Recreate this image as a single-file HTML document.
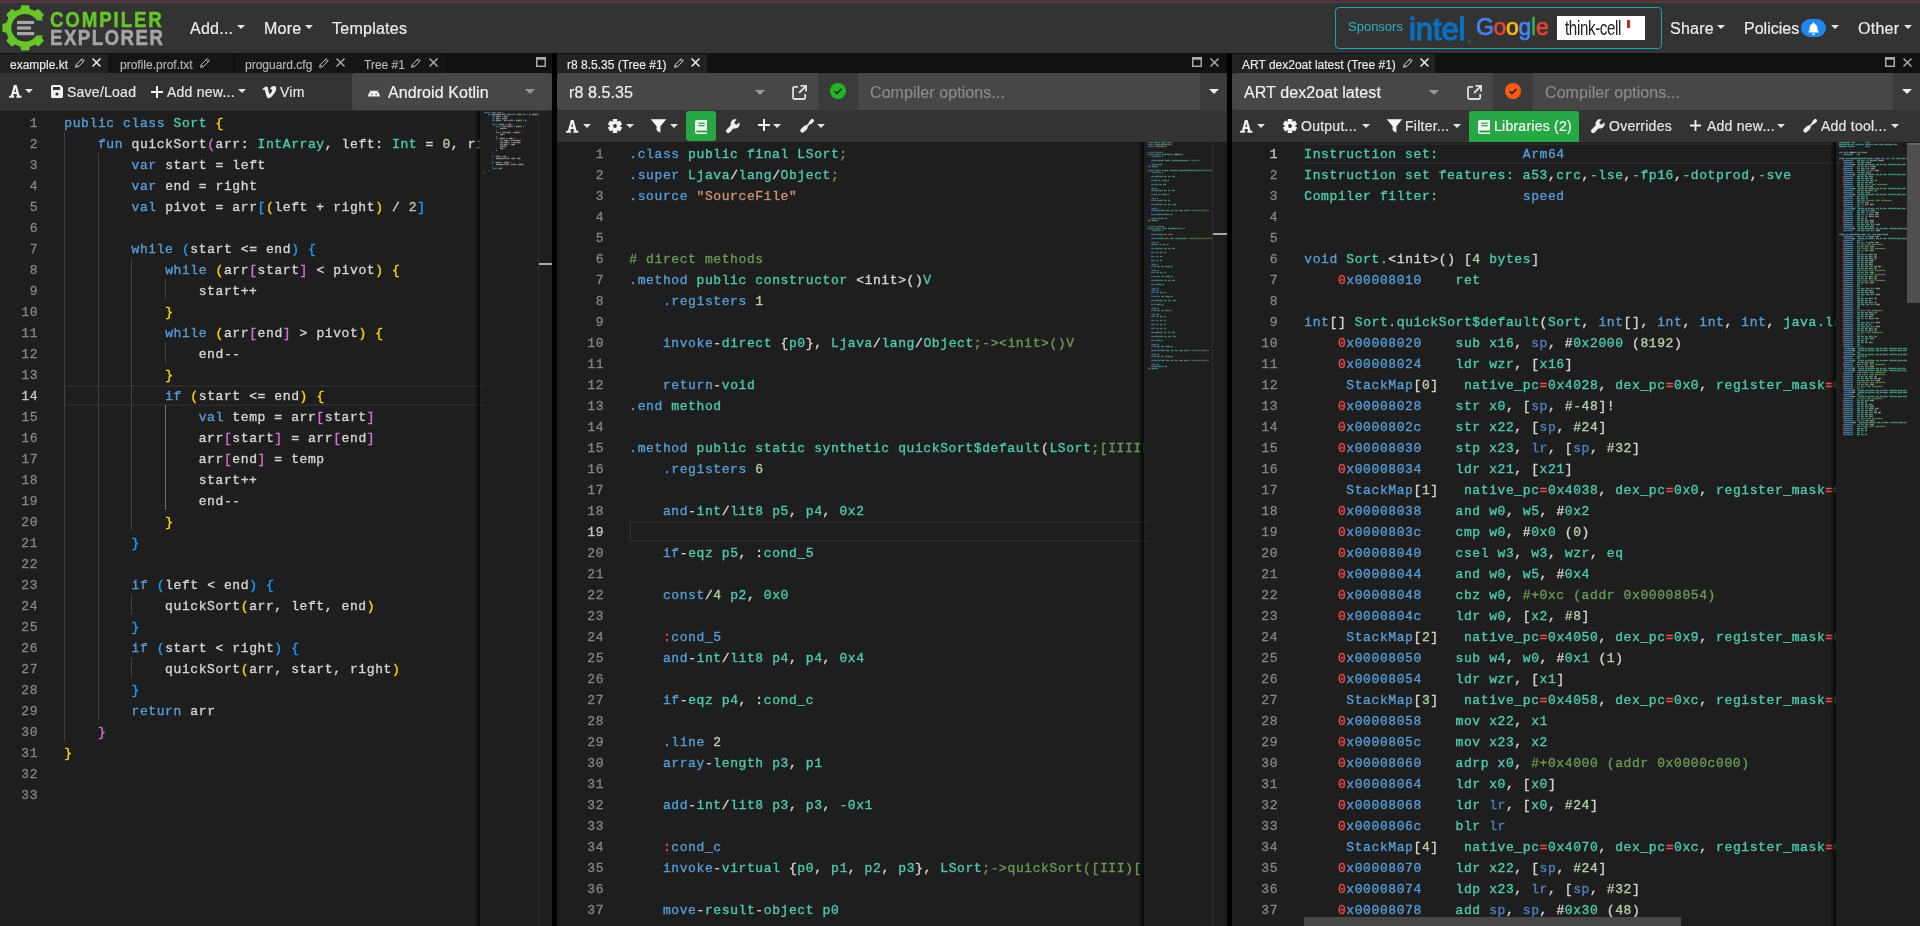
<!DOCTYPE html><html><head><meta charset="utf-8"><style>
*{box-sizing:border-box;margin:0;padding:0}
html,body{width:1920px;height:926px;overflow:hidden;background:#000;font-family:"Liberation Sans",sans-serif;color:#ddd}
.a{position:absolute}
#topline{position:absolute;left:0;top:0;width:1920px;height:3px;background:linear-gradient(#4f3239 0,#4f3239 2px,#4b4244 2px,#4b4244 3px)}
#nav{position:absolute;left:0;top:3px;width:1920px;height:50px;background:#333}
.nl{position:absolute;top:16px;font-size:16px;color:#ececec;line-height:20px;white-space:nowrap;letter-spacing:0.25px;-webkit-text-stroke:0.2px currentColor}
.car{position:absolute;width:0;height:0;border-left:4.5px solid transparent;border-right:4.5px solid transparent;border-top:5px solid #e6e6e6}
.panel{position:absolute;top:53px;height:873px;background:#1e1e1e;overflow:hidden}
.tabs{position:absolute;left:0;top:0;right:0;height:20px;background:#111}
.tab{position:absolute;top:3px;height:19px;font-size:12px;line-height:19px;color:#b8b8b8;white-space:nowrap;-webkit-text-stroke:0.15px currentColor}
.tab.act{background:#222;color:#ececec}
.tb{position:absolute;left:0;right:0;background:#333}
.tt{position:absolute;font-size:14px;line-height:18px;color:#e6e6e6;white-space:nowrap;-webkit-text-stroke:0.2px currentColor}
.code{position:absolute;font-family:"Liberation Mono",monospace;font-size:13px;letter-spacing:0.6px;line-height:21px;color:#d4d4d4;white-space:pre;-webkit-text-stroke:0.35px currentColor}
.ln{position:absolute;font-family:"Liberation Mono",monospace;font-size:13px;letter-spacing:0.6px;line-height:21px;color:#858585;text-align:right;white-space:pre;-webkit-text-stroke:0.3px currentColor}
.b{color:#569cd6}.t{color:#4ec9b0}.n{color:#b5cea8}.s{color:#ce9178}.c{color:#6a9955}.w{color:#d4d4d4}
.y{color:#ffd700}.p{color:#da70d6}.u{color:#179fff}.r{color:#f44747}.d{color:#4e80bf}
svg{position:absolute;overflow:visible}
</style></head><body><div style="position:absolute;left:0;top:0;width:1920px;height:926px;overflow:hidden;will-change:transform"><div id="topline"></div><div id="nav"><svg style="left:0;top:0" width="50" height="50" viewBox="0 0 50 50"><path fill="#67c52a" d="M17.71 6.97 L20.16 6.14 L21.22 2.13 L28.98 2.13 L30.04 6.14 L32.49 6.97 L34.80 8.11 L38.39 6.03 L43.87 11.51 L41.79 15.10 L42.93 17.41 L43.76 19.86 L47.77 20.92 L47.77 28.68 L43.76 29.74 L42.93 32.19 L41.79 34.50 L43.87 38.09 L38.39 43.57 L34.80 41.49 L32.49 42.63 L30.04 43.46 L28.98 47.47 L21.22 47.47 L20.16 43.46 L17.71 42.63 L15.40 41.49 L11.81 43.57 L6.33 38.09 L8.41 34.50 L7.27 32.19 L6.44 29.74 L2.43 28.68 L2.43 20.92 L6.44 19.86 L7.27 17.41 L8.41 15.10 L6.33 11.51 L11.81 6.03 L15.40 8.11 Z"/><circle cx="25.1" cy="24.8" r="13.8" fill="#333"/><rect x="25" y="17.5" width="26" height="14.9" fill="#333"/><rect x="17" y="17.9" width="17.2" height="3.2" fill="#a8a8a8"/><rect x="17" y="23.4" width="14" height="3.2" fill="#a8a8a8"/><rect x="17" y="29" width="17.2" height="3.2" fill="#a8a8a8"/></svg><div class="a" style="left:50px;top:6px;font-size:22px;font-weight:bold;line-height:22px;color:#67c52a;letter-spacing:2.2px;-webkit-text-stroke:0.5px #67c52a;transform:scaleX(0.85);transform-origin:0 0">COMPILER</div><div class="a" style="left:50px;top:24px;font-size:22px;font-weight:bold;line-height:22px;color:#a6a6a6;letter-spacing:1.7px;-webkit-text-stroke:0.5px #a6a6a6;transform:scaleX(0.85);transform-origin:0 0">EXPLORER</div><div class="nl" style="left:190px">Add...</div><svg style="left:237px;top:22px" width="8" height="4" viewBox="0 0 8 4"><path d="M0 0L8 0L4.0 4Z" fill="#e6e6e6"/></svg><div class="nl" style="left:264px">More</div><svg style="left:305px;top:22px" width="8" height="4" viewBox="0 0 8 4"><path d="M0 0L8 0L4.0 4Z" fill="#e6e6e6"/></svg><div class="nl" style="left:332px">Templates</div><div class="a" style="left:1335px;top:4px;width:327px;height:42px;border:1.5px solid #17a2b8;border-radius:4px"></div><div class="a" style="left:1348px;top:16px;font-size:13px;line-height:16px;color:#2fb3c0">Sponsors</div><div class="a" style="left:1409px;top:10px;font-size:31px;line-height:34px;color:#0b6fc0;letter-spacing:-0.1px;-webkit-text-stroke:1.3px #0b6fc0">intel</div><div class="a" style="left:1468px;top:37px;width:2.5px;height:2.5px;border-radius:2px;background:#2a5a88"></div><div class="a" style="left:1476px;top:10px;font-size:23px;line-height:28px;letter-spacing:-0.3px;-webkit-text-stroke:0.7px currentColor"><span style="color:#4285f4">G</span><span style="color:#ea4335">o</span><span style="color:#fbbc05">o</span><span style="color:#4285f4">g</span><span style="color:#34a853">l</span><span style="color:#ea4335">e</span></div><div class="a" style="left:1557px;top:13px;width:88px;height:24px;background:#fff"></div><div class="a" style="left:1565px;top:13px;font-size:21px;line-height:24px;color:#222;transform:scaleX(0.72);transform-origin:0 0;letter-spacing:-0.5px">think-cell</div><div class="a" style="left:1627px;top:17px;width:3px;height:8px;background:#c22"></div><div class="nl" style="left:1670px">Share</div><svg style="left:1717px;top:22px" width="8" height="4" viewBox="0 0 8 4"><path d="M0 0L8 0L4.0 4Z" fill="#e6e6e6"/></svg><div class="nl" style="left:1744px;letter-spacing:0">Policies</div><div class="a" style="left:1801px;top:16px;width:25px;height:18px;border-radius:9px;background:#1e88f0"></div><svg style="left:1807px;top:19px" width="13" height="13" viewBox="0 0 13 13"><path d="M6.5 0.5c.6 0 1 .4 1 1v.5c1.8.4 3 2 3 3.9v2.6l1.2 1.3v.8H1.3v-.8L2.5 8.5V5.9c0-1.9 1.2-3.5 3-3.9v-.5c0-.6.4-1 1-1zM5 11.5h3a1.5 1.5 0 0 1-3 0z" fill="#fff"/></svg><svg style="left:1831px;top:22px" width="8" height="4" viewBox="0 0 8 4"><path d="M0 0L8 0L4.0 4Z" fill="#e6e6e6"/></svg><div class="nl" style="left:1858px">Other</div><svg style="left:1904px;top:22px" width="8" height="4" viewBox="0 0 8 4"><path d="M0 0L8 0L4.0 4Z" fill="#e6e6e6"/></svg></div><div class="panel" style="left:0;width:552px"><div class="tabs"><div class="a" style="left:0;top:1px;width:108px;height:19px;background:#222"></div><div class="a" style="left:108px;top:1px;width:125px;height:19px;background:#151515"></div><div class="a" style="left:235px;top:1px;width:117px;height:19px;background:#151515"></div><div class="a" style="left:352px;top:1px;width:94px;height:19px;background:#151515"></div><div class="tab act" style="left:10px;padding:0 0 0 0">example.kt</div><svg style="left:75px;top:5px" width="10" height="10" viewBox="0 0 10 10"><path d="M0.6 9.4L1.3 6.6L7.2 0.7L9.3 2.8L3.4 8.7Z" fill="none" stroke="#ccc" stroke-width="1" stroke-linejoin="round"/><path d="M6.1 1.8L8.2 3.9M1.3 6.6L3.4 8.7" stroke="#ccc" stroke-width="0.9"/></svg><svg style="left:92px;top:5px" width="9" height="9" viewBox="0 0 9 9"><path d="M0.5 0.5L8.5 8.5M8.5 0.5L0.5 8.5" stroke="#eee" stroke-width="1.5"/></svg><div class="tab" style="left:120px;padding:0 0 0 0">profile.prof.txt</div><svg style="left:200px;top:5px" width="10" height="10" viewBox="0 0 10 10"><path d="M0.6 9.4L1.3 6.6L7.2 0.7L9.3 2.8L3.4 8.7Z" fill="none" stroke="#bbb" stroke-width="1" stroke-linejoin="round"/><path d="M6.1 1.8L8.2 3.9M1.3 6.6L3.4 8.7" stroke="#bbb" stroke-width="0.9"/></svg><div class="tab" style="left:245px;padding:0 0 0 0">proguard.cfg</div><svg style="left:319px;top:5px" width="10" height="10" viewBox="0 0 10 10"><path d="M0.6 9.4L1.3 6.6L7.2 0.7L9.3 2.8L3.4 8.7Z" fill="none" stroke="#bbb" stroke-width="1" stroke-linejoin="round"/><path d="M6.1 1.8L8.2 3.9M1.3 6.6L3.4 8.7" stroke="#bbb" stroke-width="0.9"/></svg><svg style="left:336px;top:5px" width="9" height="9" viewBox="0 0 9 9"><path d="M0.5 0.5L8.5 8.5M8.5 0.5L0.5 8.5" stroke="#aaa" stroke-width="1.5"/></svg><div class="tab" style="left:364px;padding:0 0 0 0">Tree #1</div><svg style="left:411px;top:5px" width="10" height="10" viewBox="0 0 10 10"><path d="M0.6 9.4L1.3 6.6L7.2 0.7L9.3 2.8L3.4 8.7Z" fill="none" stroke="#bbb" stroke-width="1" stroke-linejoin="round"/><path d="M6.1 1.8L8.2 3.9M1.3 6.6L3.4 8.7" stroke="#bbb" stroke-width="0.9"/></svg><svg style="left:429px;top:5px" width="9" height="9" viewBox="0 0 9 9"><path d="M0.5 0.5L8.5 8.5M8.5 0.5L0.5 8.5" stroke="#aaa" stroke-width="1.5"/></svg><svg style="left:536px;top:4px" width="10" height="10" viewBox="0 0 10 10"><rect x="0.75" y="0.75" width="8.5" height="8.5" fill="none" stroke="#aaa" stroke-width="1.5"/><rect x="0.75" y="0.75" width="8.5" height="2" fill="#aaa"/></svg></div><div class="tb" style="top:20px;height:38px"><svg style="left:9px;top:12px" width="12.5" height="13" viewBox="0 0 12.5 13"><path d="M4.9 0H7.6L10.6 10.7H12.4V12.8H7.4V10.7H8.2L7.7 8.9H4.8L4.3 10.7H5.1V12.8H0.1V10.7H1.9ZM6.25 2.9L5.3 6.9H7.2Z" fill="#f2f2f2" fill-rule="evenodd"/></svg><svg style="left:25px;top:16px" width="8" height="4" viewBox="0 0 8 4"><path d="M0 0L8 0L4.0 4Z" fill="#e6e6e6"/></svg><svg style="left:51px;top:12px" width="12" height="13" viewBox="0 0 12 13"><path d="M1.5 0H9.5L12 2.5V11.5A1.5 1.5 0 0 1 10.5 13H1.5A1.5 1.5 0 0 1 0 11.5V1.5A1.5 1.5 0 0 1 1.5 0Z" fill="#f2f2f2"/><rect x="2" y="2" width="7" height="3" fill="#333"/><circle cx="6" cy="9" r="1.6" fill="#333"/></svg><div class="tt" style="left:67px;top:10px;color:#e6e6e6;font-size:14px;letter-spacing:0.25px">Save/Load</div><svg style="left:151px;top:13px" width="12" height="12" viewBox="0 0 12 12"><path d="M6.0 0V12M0 6.0H12" stroke="#f0f0f0" stroke-width="2"/></svg><div class="tt" style="left:167px;top:10px;color:#e6e6e6;font-size:14px;letter-spacing:0.25px">Add new...</div><svg style="left:238px;top:16px" width="8" height="4" viewBox="0 0 8 4"><path d="M0 0L8 0L4.0 4Z" fill="#e6e6e6"/></svg><svg style="left:262px;top:13px" width="14" height="13" viewBox="0 0 14 13"><path d="M0.3 3.2C1.6 2 3 0.6 4 0.5c1.2-.1 1.9.7 2.1 2.4.3 1.9.5 3 .7 3.4.3 1.2.6 1.8.9 1.8.3 0 .8-.5 1.4-1.4.6-1 .9-1.7 1-2.2.1-.9-.3-1.3-1-1.3-.4 0-.8.1-1.1.2.7-2.4 2.1-3.5 4.1-3.4 1.5 0 2.2 1 2.1 2.9-.1 1.4-1 3.3-2.8 5.7C9.5 11.1 7.9 12.3 6.6 12.3c-.8 0-1.5-.8-2.1-2.3L3.3 5.8C2.9 4.3 2.5 3.5 2 3.5c-.1 0-.4.2-1 .6z" fill="#eee"/></svg><div class="tt" style="left:280px;top:10px;color:#e6e6e6;font-size:14px;letter-spacing:0.25px">Vim</div><div class="a" style="left:352px;top:0;width:200px;height:37px;background:#474747;border-radius:4px"></div><svg style="left:368px;top:15px" width="12" height="9" viewBox="0 0 12 9"><path d="M0 8.5A6 6 0 0 1 12 8.5Z" fill="#eee"/><path d="M2.2 2.2L3.6 4.2M9.8 2.2L8.4 4.2" stroke="#eee" stroke-width="1"/><circle cx="3.8" cy="6.4" r="0.7" fill="#474747"/><circle cx="8.2" cy="6.4" r="0.7" fill="#474747"/></svg><div class="tt" style="left:388px;top:11px;color:#f0f0f0;font-size:16px;letter-spacing:0.08px">Android Kotlin</div><svg style="left:525px;top:16px" width="10" height="5" viewBox="0 0 10 5"><path d="M0 0L10 0L5.0 5Z" fill="#999"/></svg></div><div class="ln" style="left:0;top:60px;width:38.1px"><span style="color:#858585">1</span>
<span style="color:#858585">2</span>
<span style="color:#858585">3</span>
<span style="color:#858585">4</span>
<span style="color:#858585">5</span>
<span style="color:#858585">6</span>
<span style="color:#858585">7</span>
<span style="color:#858585">8</span>
<span style="color:#858585">9</span>
<span style="color:#858585">10</span>
<span style="color:#858585">11</span>
<span style="color:#858585">12</span>
<span style="color:#858585">13</span>
<span style="color:#c6c6c6">14</span>
<span style="color:#858585">15</span>
<span style="color:#858585">16</span>
<span style="color:#858585">17</span>
<span style="color:#858585">18</span>
<span style="color:#858585">19</span>
<span style="color:#858585">20</span>
<span style="color:#858585">21</span>
<span style="color:#858585">22</span>
<span style="color:#858585">23</span>
<span style="color:#858585">24</span>
<span style="color:#858585">25</span>
<span style="color:#858585">26</span>
<span style="color:#858585">27</span>
<span style="color:#858585">28</span>
<span style="color:#858585">29</span>
<span style="color:#858585">30</span>
<span style="color:#858585">31</span>
<span style="color:#858585">32</span>
<span style="color:#858585">33</span></div><div class="a" style="left:64px;top:332px;width:420px;height:21px;border:2px solid #282828;border-right:none"></div><div class="a" style="left:64px;top:58px;width:416px;height:815px;overflow:hidden"><div class="code" style="left:0.3px;top:2px"><span class="b">public class </span><span class="t">Sort </span><span class="y">{</span>
    <span class="b">fun </span>quickSort<span class="p">(</span>arr: <span class="t">IntArray</span>, left: <span class="t">Int </span>= <span class="n">0</span>, right: <span class="t">Int </span>= arr.size - <span class="n">1</span><span class="p">)</span>: <span class="t">IntArray </span><span class="p">{</span>
        <span class="b">var </span>start = left
        <span class="b">var </span>end = right
        <span class="b">val </span>pivot = arr<span class="u">[</span><span class="y">(</span>left + right<span class="y">)</span> / <span class="n">2</span><span class="u">]</span>

        <span class="b">while </span><span class="u">(</span>start &lt;= end<span class="u">) {</span>
            <span class="b">while </span><span class="y">(</span>arr<span class="p">[</span>start<span class="p">]</span> &lt; pivot<span class="y">) {</span>
                start++
            <span class="y">}</span>
            <span class="b">while </span><span class="y">(</span>arr<span class="p">[</span>end<span class="p">]</span> &gt; pivot<span class="y">) {</span>
                end--
            <span class="y">}</span>
            <span class="b">if </span><span class="y">(</span>start &lt;= end<span class="y">) {</span>
                <span class="b">val </span>temp = arr<span class="p">[</span>start<span class="p">]</span>
                arr<span class="p">[</span>start<span class="p">]</span> = arr<span class="p">[</span>end<span class="p">]</span>
                arr<span class="p">[</span>end<span class="p">]</span> = temp
                start++
                end--
            <span class="y">}</span>
        <span class="u">}</span>

        <span class="b">if </span><span class="u">(</span>left &lt; end<span class="u">) {</span>
            quickSort<span class="y">(</span>arr, left, end<span class="y">)</span>
        <span class="u">}</span>
        <span class="b">if </span><span class="u">(</span>start &lt; right<span class="u">) {</span>
            quickSort<span class="y">(</span>arr, start, right<span class="y">)</span>
        <span class="u">}</span>
        <span class="b">return </span>arr
    <span class="p">}</span>
<span class="y">}</span>

</div></div><div class="a" style="left:64px;top:79px;width:1px;height:21px;background:#404040"></div><div class="a" style="left:64px;top:100px;width:1px;height:21px;background:#404040"></div><div class="a" style="left:98px;top:100px;width:1px;height:21px;background:#404040"></div><div class="a" style="left:64px;top:121px;width:1px;height:21px;background:#404040"></div><div class="a" style="left:98px;top:121px;width:1px;height:21px;background:#404040"></div><div class="a" style="left:64px;top:142px;width:1px;height:21px;background:#404040"></div><div class="a" style="left:98px;top:142px;width:1px;height:21px;background:#404040"></div><div class="a" style="left:64px;top:163px;width:1px;height:21px;background:#404040"></div><div class="a" style="left:98px;top:163px;width:1px;height:21px;background:#404040"></div><div class="a" style="left:64px;top:184px;width:1px;height:21px;background:#404040"></div><div class="a" style="left:98px;top:184px;width:1px;height:21px;background:#404040"></div><div class="a" style="left:64px;top:205px;width:1px;height:21px;background:#404040"></div><div class="a" style="left:98px;top:205px;width:1px;height:21px;background:#404040"></div><div class="a" style="left:131px;top:205px;width:1px;height:21px;background:#404040"></div><div class="a" style="left:64px;top:226px;width:1px;height:21px;background:#404040"></div><div class="a" style="left:98px;top:226px;width:1px;height:21px;background:#404040"></div><div class="a" style="left:131px;top:226px;width:1px;height:21px;background:#404040"></div><div class="a" style="left:165px;top:226px;width:1px;height:21px;background:#404040"></div><div class="a" style="left:64px;top:247px;width:1px;height:21px;background:#404040"></div><div class="a" style="left:98px;top:247px;width:1px;height:21px;background:#404040"></div><div class="a" style="left:131px;top:247px;width:1px;height:21px;background:#404040"></div><div class="a" style="left:64px;top:268px;width:1px;height:21px;background:#404040"></div><div class="a" style="left:98px;top:268px;width:1px;height:21px;background:#404040"></div><div class="a" style="left:131px;top:268px;width:1px;height:21px;background:#404040"></div><div class="a" style="left:64px;top:289px;width:1px;height:21px;background:#404040"></div><div class="a" style="left:98px;top:289px;width:1px;height:21px;background:#404040"></div><div class="a" style="left:131px;top:289px;width:1px;height:21px;background:#404040"></div><div class="a" style="left:165px;top:289px;width:1px;height:21px;background:#404040"></div><div class="a" style="left:64px;top:310px;width:1px;height:21px;background:#404040"></div><div class="a" style="left:98px;top:310px;width:1px;height:21px;background:#404040"></div><div class="a" style="left:131px;top:310px;width:1px;height:21px;background:#404040"></div><div class="a" style="left:64px;top:331px;width:1px;height:21px;background:#404040"></div><div class="a" style="left:98px;top:331px;width:1px;height:21px;background:#404040"></div><div class="a" style="left:131px;top:331px;width:1px;height:21px;background:#404040"></div><div class="a" style="left:64px;top:352px;width:1px;height:21px;background:#404040"></div><div class="a" style="left:98px;top:352px;width:1px;height:21px;background:#404040"></div><div class="a" style="left:131px;top:352px;width:1px;height:21px;background:#404040"></div><div class="a" style="left:165px;top:352px;width:1px;height:21px;background:#707070"></div><div class="a" style="left:64px;top:373px;width:1px;height:21px;background:#404040"></div><div class="a" style="left:98px;top:373px;width:1px;height:21px;background:#404040"></div><div class="a" style="left:131px;top:373px;width:1px;height:21px;background:#404040"></div><div class="a" style="left:165px;top:373px;width:1px;height:21px;background:#707070"></div><div class="a" style="left:64px;top:394px;width:1px;height:21px;background:#404040"></div><div class="a" style="left:98px;top:394px;width:1px;height:21px;background:#404040"></div><div class="a" style="left:131px;top:394px;width:1px;height:21px;background:#404040"></div><div class="a" style="left:165px;top:394px;width:1px;height:21px;background:#707070"></div><div class="a" style="left:64px;top:415px;width:1px;height:21px;background:#404040"></div><div class="a" style="left:98px;top:415px;width:1px;height:21px;background:#404040"></div><div class="a" style="left:131px;top:415px;width:1px;height:21px;background:#404040"></div><div class="a" style="left:165px;top:415px;width:1px;height:21px;background:#707070"></div><div class="a" style="left:64px;top:436px;width:1px;height:21px;background:#404040"></div><div class="a" style="left:98px;top:436px;width:1px;height:21px;background:#404040"></div><div class="a" style="left:131px;top:436px;width:1px;height:21px;background:#404040"></div><div class="a" style="left:165px;top:436px;width:1px;height:21px;background:#707070"></div><div class="a" style="left:64px;top:457px;width:1px;height:21px;background:#404040"></div><div class="a" style="left:98px;top:457px;width:1px;height:21px;background:#404040"></div><div class="a" style="left:131px;top:457px;width:1px;height:21px;background:#404040"></div><div class="a" style="left:64px;top:478px;width:1px;height:21px;background:#404040"></div><div class="a" style="left:98px;top:478px;width:1px;height:21px;background:#404040"></div><div class="a" style="left:64px;top:499px;width:1px;height:21px;background:#404040"></div><div class="a" style="left:98px;top:499px;width:1px;height:21px;background:#404040"></div><div class="a" style="left:64px;top:520px;width:1px;height:21px;background:#404040"></div><div class="a" style="left:98px;top:520px;width:1px;height:21px;background:#404040"></div><div class="a" style="left:64px;top:541px;width:1px;height:21px;background:#404040"></div><div class="a" style="left:98px;top:541px;width:1px;height:21px;background:#404040"></div><div class="a" style="left:131px;top:541px;width:1px;height:21px;background:#404040"></div><div class="a" style="left:64px;top:562px;width:1px;height:21px;background:#404040"></div><div class="a" style="left:98px;top:562px;width:1px;height:21px;background:#404040"></div><div class="a" style="left:64px;top:583px;width:1px;height:21px;background:#404040"></div><div class="a" style="left:98px;top:583px;width:1px;height:21px;background:#404040"></div><div class="a" style="left:64px;top:604px;width:1px;height:21px;background:#404040"></div><div class="a" style="left:98px;top:604px;width:1px;height:21px;background:#404040"></div><div class="a" style="left:131px;top:604px;width:1px;height:21px;background:#404040"></div><div class="a" style="left:64px;top:625px;width:1px;height:21px;background:#404040"></div><div class="a" style="left:98px;top:625px;width:1px;height:21px;background:#404040"></div><div class="a" style="left:64px;top:646px;width:1px;height:21px;background:#404040"></div><div class="a" style="left:98px;top:646px;width:1px;height:21px;background:#404040"></div><div class="a" style="left:64px;top:667px;width:1px;height:21px;background:#404040"></div><div class="a" style="left:484px;top:59px;width:55px;height:80px;overflow:hidden"><div style="position:absolute;left:0;top:0;font-family:'Liberation Mono',monospace;font-size:10px;line-height:12px;white-space:pre;color:#d4d4d4;transform:scale(0.1667);transform-origin:0 0;-webkit-text-stroke:1.6px currentColor;opacity:0.62"><span class="b">public class </span><span class="t">Sort </span><span class="y">{</span>
    <span class="b">fun </span>quickSort<span class="p">(</span>arr: <span class="t">IntArray</span>, left: <span class="t">Int </span>= <span class="n">0</span>, right: <span class="t">Int </span>= arr.size - <span class="n">1</span><span class="p">)</span>: <span class="t">IntArray </span><span class="p">{</span>
        <span class="b">var </span>start = left
        <span class="b">var </span>end = right
        <span class="b">val </span>pivot = arr<span class="u">[</span><span class="y">(</span>left + right<span class="y">)</span> / <span class="n">2</span><span class="u">]</span>

        <span class="b">while </span><span class="u">(</span>start &lt;= end<span class="u">) {</span>
            <span class="b">while </span><span class="y">(</span>arr<span class="p">[</span>start<span class="p">]</span> &lt; pivot<span class="y">) {</span>
                start++
            <span class="y">}</span>
            <span class="b">while </span><span class="y">(</span>arr<span class="p">[</span>end<span class="p">]</span> &gt; pivot<span class="y">) {</span>
                end--
            <span class="y">}</span>
            <span class="b">if </span><span class="y">(</span>start &lt;= end<span class="y">) {</span>
                <span class="b">val </span>temp = arr<span class="p">[</span>start<span class="p">]</span>
                arr<span class="p">[</span>start<span class="p">]</span> = arr<span class="p">[</span>end<span class="p">]</span>
                arr<span class="p">[</span>end<span class="p">]</span> = temp
                start++
                end--
            <span class="y">}</span>
        <span class="u">}</span>

        <span class="b">if </span><span class="u">(</span>left &lt; end<span class="u">) {</span>
            quickSort<span class="y">(</span>arr, left, end<span class="y">)</span>
        <span class="u">}</span>
        <span class="b">if </span><span class="u">(</span>start &lt; right<span class="u">) {</span>
            quickSort<span class="y">(</span>arr, start, right<span class="y">)</span>
        <span class="u">}</span>
        <span class="b">return </span>arr
    <span class="p">}</span>
<span class="y">}</span>

</div></div><div class="a" style="left:474px;top:58px;width:6px;height:815px;background:linear-gradient(to right,rgba(0,0,0,0),rgba(0,0,0,0.8))"></div><div class="a" style="left:538px;top:58px;width:1px;height:815px;background:#2f2f2f"></div><div class="a" style="left:539px;top:210px;width:13px;height:2px;background:#a8a8a8"></div></div><div class="panel" style="left:557px;width:670px"><div class="tabs"><div class="a" style="left:0;top:1px;width:150px;height:19px;background:#222"></div><div class="tab act" style="left:10px;padding:0 0 0 0">r8 8.5.35 (Tree #1)</div><svg style="left:117px;top:5px" width="10" height="10" viewBox="0 0 10 10"><path d="M0.6 9.4L1.3 6.6L7.2 0.7L9.3 2.8L3.4 8.7Z" fill="none" stroke="#ccc" stroke-width="1" stroke-linejoin="round"/><path d="M6.1 1.8L8.2 3.9M1.3 6.6L3.4 8.7" stroke="#ccc" stroke-width="0.9"/></svg><svg style="left:134px;top:5px" width="9" height="9" viewBox="0 0 9 9"><path d="M0.5 0.5L8.5 8.5M8.5 0.5L0.5 8.5" stroke="#eee" stroke-width="1.5"/></svg><svg style="left:635px;top:4px" width="10" height="10" viewBox="0 0 10 10"><rect x="0.75" y="0.75" width="8.5" height="8.5" fill="none" stroke="#aaa" stroke-width="1.5"/><rect x="0.75" y="0.75" width="8.5" height="2" fill="#aaa"/></svg><svg style="left:653px;top:5px" width="9" height="9" viewBox="0 0 9 9"><path d="M0.5 0.5L8.5 8.5M8.5 0.5L0.5 8.5" stroke="#aaa" stroke-width="1.5"/></svg></div><div class="tb" style="top:20px;height:69px"><div class="a" style="left:0;top:0;width:670px;height:37px;background:#474747;border-radius:4px"></div><div class="tt" style="left:12px;top:11px;color:#f0f0f0;font-size:16px;letter-spacing:0.08px">r8 8.5.35</div><svg style="left:198px;top:17px" width="10" height="5" viewBox="0 0 10 5"><path d="M0 0L10 0L5.0 5Z" fill="#999"/></svg><svg style="left:235px;top:12px" width="15" height="15" viewBox="0 0 15 15"><path d="M6 1.8H2.2A1.2 1.2 0 0 0 1 3V12.8A1.2 1.2 0 0 0 2.2 14H12A1.2 1.2 0 0 0 13.2 12.8V9" fill="none" stroke="#ddd" stroke-width="1.8"/><path d="M8.5 0.9H14.1V6.5M14 1L7 8" fill="none" stroke="#ddd" stroke-width="1.8"/></svg><div class="a" style="left:261px;top:0;width:40px;height:37px;background:#3b3b3b"></div><svg style="left:273px;top:10px" width="16" height="16" viewBox="0 0 16 16"><circle cx="8" cy="8" r="8" fill="#22b722"/><path d="M4.5 8.2L7 10.6L11.6 5.8" fill="none" stroke="#2b2b2b" stroke-width="1.8"/></svg><div class="tt" style="left:313px;top:11px;color:#8a8a8a;font-size:16px;letter-spacing:0.08px">Compiler options...</div><div class="a" style="left:643px;top:0;width:27px;height:37px;background:#3b3b3b"></div><svg style="left:652px;top:16px" width="10" height="5" viewBox="0 0 10 5"><path d="M0 0L10 0L5.0 5Z" fill="#eee"/></svg><svg style="left:9px;top:47px" width="12.5" height="13" viewBox="0 0 12.5 13"><path d="M4.9 0H7.6L10.6 10.7H12.4V12.8H7.4V10.7H8.2L7.7 8.9H4.8L4.3 10.7H5.1V12.8H0.1V10.7H1.9ZM6.25 2.9L5.3 6.9H7.2Z" fill="#f2f2f2" fill-rule="evenodd"/></svg><svg style="left:26px;top:51px" width="8" height="4" viewBox="0 0 8 4"><path d="M0 0L8 0L4.0 4Z" fill="#e6e6e6"/></svg><svg style="left:51px;top:46px" width="14" height="14" viewBox="0 0 14 14"><path d="M5.29 2.95L5.30 0.62L8.70 0.62L8.71 2.95L9.65 3.49L11.68 2.34L13.37 5.28L11.37 6.46L11.37 7.54L13.37 8.72L11.68 11.66L9.65 10.51L8.71 11.05L8.70 13.38L5.30 13.38L5.29 11.05L4.35 10.51L2.32 11.66L0.63 8.72L2.63 7.54L2.63 6.46L0.63 5.28L2.32 2.34L4.35 3.49Z" fill="#f5f5f5" stroke="#f5f5f5" stroke-width="1.2" stroke-linejoin="round"/><circle cx="7.0" cy="7.0" r="1.9" fill="#333"/></svg><svg style="left:69px;top:51px" width="8" height="4" viewBox="0 0 8 4"><path d="M0 0L8 0L4.0 4Z" fill="#e6e6e6"/></svg><svg style="left:94px;top:46px" width="15" height="14" viewBox="0 0 15 14"><path d="M0.3 0.6H14.7L9.1 7.2V13.3L5.9 11.3V7.2Z" fill="#f5f5f5" stroke="#f5f5f5" stroke-width="0.6" stroke-linejoin="round"/></svg><svg style="left:113px;top:51px" width="8" height="4" viewBox="0 0 8 4"><path d="M0 0L8 0L4.0 4Z" fill="#e6e6e6"/></svg><div class="a" style="left:129px;top:38px;width:30px;height:30px;background:#28a745;border-radius:3px"></div><svg style="left:138px;top:47px" width="12" height="14" viewBox="0 0 12 14"><path d="M2 0H12V10.5H2.2A1 1 0 0 0 2.2 12.5H12V14H2A2 2 0 0 1 0 12V2A2 2 0 0 1 2 0Z" fill="#f5f5f5"/><rect x="3.3" y="2.6" width="6.4" height="1.3" fill="#28a745"/><rect x="3.3" y="5" width="6.4" height="1.3" fill="#28a745"/></svg><svg style="left:169px;top:46px" width="14" height="14" viewBox="0 0 14 14"><path d="M13.3 3.3L11 5.6 8.9 5.1 8.4 3 10.7 0.7C9 0 7 .4 5.8 1.7 4.6 2.9 4.3 4.6 4.8 6.2L0.6 10.4A1.6 1.6 0 0 0 3.6 13.4L7.8 9.2C9.4 9.7 11.1 9.4 12.3 8.2 13.6 7 14 5 13.3 3.3Z" fill="#eee"/></svg><svg style="left:201px;top:46px" width="12" height="12" viewBox="0 0 12 12"><path d="M6.0 0V12M0 6.0H12" stroke="#eee" stroke-width="2"/></svg><svg style="left:216px;top:51px" width="8" height="4" viewBox="0 0 8 4"><path d="M0 0L8 0L4.0 4Z" fill="#e6e6e6"/></svg><svg style="left:243px;top:46px" width="14" height="14" viewBox="0 0 14 14"><path d="M12.4 1.6L10.6 3.4" stroke="#eee" stroke-width="3.4" stroke-linecap="round"/><path d="M10.6 3.4L6.6 7.4" stroke="#eee" stroke-width="1.7"/><path d="M5.6 8.4L2.4 11.6" stroke="#eee" stroke-width="4.2" stroke-linecap="round"/></svg><svg style="left:260px;top:51px" width="8" height="4" viewBox="0 0 8 4"><path d="M0 0L8 0L4.0 4Z" fill="#e6e6e6"/></svg></div><div class="ln" style="left:0;top:91px;width:47.1px"><span style="color:#858585">1</span>
<span style="color:#858585">2</span>
<span style="color:#858585">3</span>
<span style="color:#858585">4</span>
<span style="color:#858585">5</span>
<span style="color:#858585">6</span>
<span style="color:#858585">7</span>
<span style="color:#858585">8</span>
<span style="color:#858585">9</span>
<span style="color:#858585">10</span>
<span style="color:#858585">11</span>
<span style="color:#858585">12</span>
<span style="color:#858585">13</span>
<span style="color:#858585">14</span>
<span style="color:#858585">15</span>
<span style="color:#858585">16</span>
<span style="color:#858585">17</span>
<span style="color:#858585">18</span>
<span style="color:#c6c6c6">19</span>
<span style="color:#858585">20</span>
<span style="color:#858585">21</span>
<span style="color:#858585">22</span>
<span style="color:#858585">23</span>
<span style="color:#858585">24</span>
<span style="color:#858585">25</span>
<span style="color:#858585">26</span>
<span style="color:#858585">27</span>
<span style="color:#858585">28</span>
<span style="color:#858585">29</span>
<span style="color:#858585">30</span>
<span style="color:#858585">31</span>
<span style="color:#858585">32</span>
<span style="color:#858585">33</span>
<span style="color:#858585">34</span>
<span style="color:#858585">35</span>
<span style="color:#858585">36</span>
<span style="color:#858585">37</span></div><div class="a" style="left:72px;top:468px;width:519px;height:21px;border:2px solid #282828;border-right:none"></div><div class="a" style="left:72px;top:89px;width:515px;height:784px;overflow:hidden"><div class="code" style="left:0.3px;top:2px"><span class="b">.class </span><span class="t">public final LSort</span><span class="c">;</span>
<span class="b">.super </span><span class="t">Ljava</span>/<span class="t">lang</span>/<span class="t">Object</span><span class="c">;</span>
<span class="b">.source </span><span class="s">&quot;SourceFile&quot;</span>


<span class="c"># direct methods</span>
<span class="b">.method </span><span class="t">public constructor </span>&lt;init&gt;()<span class="t">V</span>
    <span class="b">.registers </span><span class="n">1</span>

    <span class="b">invoke</span>-<span class="t">direct </span>{<span class="t">p0</span>}, <span class="t">Ljava</span>/<span class="t">lang</span>/<span class="t">Object</span><span class="c">;-&gt;&lt;init&gt;()V</span>

    <span class="b">return</span>-<span class="t">void</span>
<span class="b">.end </span><span class="t">method</span>

<span class="b">.method </span><span class="t">public static synthetic quickSort$default</span>(<span class="t">LSort</span><span class="c">;[IIIILjava/lang/Object;)[I</span>
    <span class="b">.registers </span><span class="n">6</span>

    <span class="b">and</span>-<span class="t">int</span>/<span class="t">lit8 p5</span>, <span class="t">p4</span>, <span class="t">0x2</span>

    <span class="b">if</span>-<span class="t">eqz p5</span>, :<span class="t">cond_5</span>

    <span class="b">const</span>/<span class="n">4 </span><span class="t">p2</span>, <span class="t">0x0</span>

    <span class="r">:</span><span class="b">cond_5</span>
    <span class="b">and</span>-<span class="t">int</span>/<span class="t">lit8 p4</span>, <span class="t">p4</span>, <span class="t">0x4</span>

    <span class="b">if</span>-<span class="t">eqz p4</span>, :<span class="t">cond_c</span>

    <span class="b">.line </span><span class="n">2</span>
    <span class="b">array</span>-<span class="t">length p3</span>, <span class="t">p1</span>

    <span class="b">add</span>-<span class="t">int</span>/<span class="t">lit8 p3</span>, <span class="t">p3</span>, <span class="t">-0x1</span>

    <span class="r">:</span><span class="b">cond_c</span>
    <span class="b">invoke</span>-<span class="t">virtual </span>{<span class="t">p0</span>, <span class="t">p1</span>, <span class="t">p2</span>, <span class="t">p3</span>}, <span class="t">LSort</span><span class="c">;-&gt;quickSort([III)[I</span>

    <span class="b">move</span>-<span class="t">result</span>-<span class="t">object p0</span></div></div><div class="a" style="left:590px;top:89px;width:65px;height:300px;overflow:hidden"><div style="position:absolute;left:0;top:0;font-family:'Liberation Mono',monospace;font-size:10px;line-height:12px;white-space:pre;color:#d4d4d4;transform:scale(0.1667);transform-origin:0 0;-webkit-text-stroke:1.6px currentColor;opacity:0.62"><span class="b">.class </span><span class="t">public final LSort</span><span class="c">;</span>
<span class="b">.super </span><span class="t">Ljava</span>/<span class="t">lang</span>/<span class="t">Object</span><span class="c">;</span>
<span class="b">.source </span><span class="s">&quot;SourceFile&quot;</span>


<span class="c"># direct methods</span>
<span class="b">.method </span><span class="t">public constructor </span>&lt;init&gt;()<span class="t">V</span>
    <span class="b">.registers </span><span class="n">1</span>

    <span class="b">invoke</span>-<span class="t">direct </span>{<span class="t">p0</span>}, <span class="t">Ljava</span>/<span class="t">lang</span>/<span class="t">Object</span><span class="c">;-&gt;&lt;init&gt;()V</span>

    <span class="b">return</span>-<span class="t">void</span>
<span class="b">.end </span><span class="t">method</span>

<span class="b">.method </span><span class="t">public static synthetic quickSort$default</span>(<span class="t">LSort</span><span class="c">;[IIIILjava/lang/Object;)[I</span>
    <span class="b">.registers </span><span class="n">6</span>

    <span class="b">and</span>-<span class="t">int</span>/<span class="t">lit8 p5</span>, <span class="t">p4</span>, <span class="t">0x2</span>

    <span class="b">if</span>-<span class="t">eqz p5</span>, :<span class="t">cond_5</span>

    <span class="b">const</span>/<span class="n">4 </span><span class="t">p2</span>, <span class="t">0x0</span>

    <span class="r">:</span><span class="b">cond_5</span>
    <span class="b">and</span>-<span class="t">int</span>/<span class="t">lit8 p4</span>, <span class="t">p4</span>, <span class="t">0x4</span>

    <span class="b">if</span>-<span class="t">eqz p4</span>, :<span class="t">cond_c</span>

    <span class="b">.line </span><span class="n">2</span>
    <span class="b">array</span>-<span class="t">length p3</span>, <span class="t">p1</span>

    <span class="b">add</span>-<span class="t">int</span>/<span class="t">lit8 p3</span>, <span class="t">p3</span>, <span class="t">-0x1</span>

    <span class="r">:</span><span class="b">cond_c</span>
    <span class="b">invoke</span>-<span class="t">virtual </span>{<span class="t">p0</span>, <span class="t">p1</span>, <span class="t">p2</span>, <span class="t">p3</span>}, <span class="t">LSort</span><span class="c">;-&gt;quickSort([III)[I</span>

    <span class="b">move</span>-<span class="t">result</span>-<span class="t">object p0</span>

    <span class="b">return</span>-<span class="t">object p0</span>
<span class="b">.end </span><span class="t">method</span>


<span class="c"># virtual methods</span>
<span class="b">.method </span><span class="t">public final quickSort</span>(<span class="c">[III)[I</span>
    <span class="b">.registers </span><span class="n">8</span>

    <span class="b">const</span>-<span class="t">string v0</span>, <span class="s">&quot;arr&quot;</span>

    <span class="b">invoke</span>-<span class="t">static </span>{<span class="t">p1</span>, <span class="t">v0</span>}, <span class="t">Lkotlin</span>/<span class="t">jvm</span><span class="c">;-&gt;checkNotNullParameter(Ljava/lang/Object;Ljava/lang/String;)V</span>

    <span class="b">.line </span><span class="n">3</span>
    <span class="b">add</span>-<span class="t">int v0</span>, <span class="t">p2</span>, <span class="t">p3</span>

    <span class="b">div</span>-<span class="t">int</span>/<span class="t">lit8 v0</span>, <span class="t">v0</span>, <span class="t">0x2</span>

    <span class="b">aget v0</span>, <span class="t">p1</span>, <span class="t">v0</span>

    <span class="b">move v1</span>, <span class="t">p2</span>

    <span class="b">move v2</span>, <span class="t">p3</span>

    <span class="r">:</span><span class="b">goto_e</span>
    <span class="b">if</span>-<span class="t">gt v1</span>, <span class="t">v2</span>, :<span class="t">cond_2e</span>

    <span class="r">:</span><span class="b">goto_10</span>
    <span class="b">aget v3</span>, <span class="t">p1</span>, <span class="t">v1</span>

    <span class="b">if</span>-<span class="t">ge v3</span>, <span class="t">v0</span>, :<span class="t">cond_17</span>

    <span class="b">add</span>-<span class="t">int</span>/<span class="t">lit8 v1</span>, <span class="t">v1</span>, <span class="t">0x1</span>

    <span class="b">goto </span>:<span class="t">goto_10</span>

    <span class="r">:</span><span class="b">cond_17</span>
    <span class="r">:</span><span class="b">goto_17</span>
    <span class="b">aget v3</span>, <span class="t">p1</span>, <span class="t">v2</span>

    <span class="b">if</span>-<span class="t">le v3</span>, <span class="t">v0</span>, :<span class="t">cond_1e</span>

    <span class="b">add</span>-<span class="t">int</span>/<span class="t">lit8 v2</span>, <span class="t">v2</span>, <span class="t">-0x1</span>

    <span class="b">goto </span>:<span class="t">goto_17</span>

    <span class="r">:</span><span class="b">cond_1e</span>
    <span class="b">if</span>-<span class="t">gt v1</span>, <span class="t">v2</span>, :<span class="t">goto_e</span>

    <span class="b">.line </span><span class="n">15</span>
    <span class="b">aget v3</span>, <span class="t">p1</span>, <span class="t">v1</span>

    <span class="b">aget v4</span>, <span class="t">p1</span>, <span class="t">v2</span>

    <span class="b">aput v4</span>, <span class="t">p1</span>, <span class="t">v1</span>

    <span class="b">aput v3</span>, <span class="t">p1</span>, <span class="t">v2</span>

    <span class="b">add</span>-<span class="t">int</span>/<span class="t">lit8 v1</span>, <span class="t">v1</span>, <span class="t">0x1</span>

    <span class="b">add</span>-<span class="t">int</span>/<span class="t">lit8 v2</span>, <span class="t">v2</span>, <span class="t">-0x1</span>

    <span class="b">goto </span>:<span class="t">goto_e</span>

    <span class="r">:</span><span class="b">cond_2e</span>
    <span class="b">if</span>-<span class="t">ge p2</span>, <span class="t">v2</span>, :<span class="t">cond_38</span>

    <span class="b">invoke</span>-<span class="t">virtual </span>{<span class="t">p0</span>, <span class="t">p1</span>, <span class="t">p2</span>, <span class="t">v2</span>}, <span class="t">LSort</span><span class="c">;-&gt;quickSort([III)[I</span>

    <span class="r">:</span><span class="b">cond_38</span>
    <span class="b">if</span>-<span class="t">ge v1</span>, <span class="t">p3</span>, :<span class="t">cond_3d</span>

    <span class="b">invoke</span>-<span class="t">virtual </span>{<span class="t">p0</span>, <span class="t">p1</span>, <span class="t">v1</span>, <span class="t">p3</span>}, <span class="t">LSort</span><span class="c">;-&gt;quickSort([III)[I</span>

    <span class="r">:</span><span class="b">cond_3d</span>
    <span class="b">return</span>-<span class="t">object p1</span>
<span class="b">.end </span><span class="t">method</span>
</div></div><div class="a" style="left:581px;top:89px;width:6px;height:784px;background:linear-gradient(to right,rgba(0,0,0,0),rgba(0,0,0,0.8))"></div><div class="a" style="left:655px;top:89px;width:1px;height:784px;background:#2f2f2f"></div><div class="a" style="left:656px;top:180px;width:14px;height:2px;background:#a8a8a8"></div></div><div class="panel" style="left:1232px;width:688px"><div class="tabs"><div class="a" style="left:0;top:1px;width:203px;height:19px;background:#222"></div><div class="tab act" style="left:10px;padding:0 0 0 0">ART dex2oat latest (Tree #1)</div><svg style="left:171px;top:5px" width="10" height="10" viewBox="0 0 10 10"><path d="M0.6 9.4L1.3 6.6L7.2 0.7L9.3 2.8L3.4 8.7Z" fill="none" stroke="#ccc" stroke-width="1" stroke-linejoin="round"/><path d="M6.1 1.8L8.2 3.9M1.3 6.6L3.4 8.7" stroke="#ccc" stroke-width="0.9"/></svg><svg style="left:188px;top:5px" width="9" height="9" viewBox="0 0 9 9"><path d="M0.5 0.5L8.5 8.5M8.5 0.5L0.5 8.5" stroke="#eee" stroke-width="1.5"/></svg><svg style="left:653px;top:4px" width="10" height="10" viewBox="0 0 10 10"><rect x="0.75" y="0.75" width="8.5" height="8.5" fill="none" stroke="#aaa" stroke-width="1.5"/><rect x="0.75" y="0.75" width="8.5" height="2" fill="#aaa"/></svg><svg style="left:671px;top:5px" width="9" height="9" viewBox="0 0 9 9"><path d="M0.5 0.5L8.5 8.5M8.5 0.5L0.5 8.5" stroke="#aaa" stroke-width="1.5"/></svg></div><div class="tb" style="top:20px;height:69px"><div class="a" style="left:0;top:0;width:688px;height:37px;background:#474747;border-radius:4px 0 0 4px"></div><div class="tt" style="left:12px;top:11px;color:#f0f0f0;font-size:16px;letter-spacing:0.08px">ART dex2oat latest</div><svg style="left:197px;top:17px" width="10" height="5" viewBox="0 0 10 5"><path d="M0 0L10 0L5.0 5Z" fill="#999"/></svg><svg style="left:235px;top:12px" width="15" height="15" viewBox="0 0 15 15"><path d="M6 1.8H2.2A1.2 1.2 0 0 0 1 3V12.8A1.2 1.2 0 0 0 2.2 14H12A1.2 1.2 0 0 0 13.2 12.8V9" fill="none" stroke="#ddd" stroke-width="1.8"/><path d="M8.5 0.9H14.1V6.5M14 1L7 8" fill="none" stroke="#ddd" stroke-width="1.8"/></svg><div class="a" style="left:261px;top:0;width:40px;height:37px;background:#3b3b3b"></div><svg style="left:273px;top:10px" width="16" height="16" viewBox="0 0 16 16"><circle cx="8" cy="8" r="8" fill="#ff5a12"/><path d="M4.5 8.2L7 10.6L11.6 5.8" fill="none" stroke="#2b2b2b" stroke-width="1.8"/></svg><div class="tt" style="left:313px;top:11px;color:#8a8a8a;font-size:16px;letter-spacing:0.08px">Compiler options...</div><div class="a" style="left:661px;top:0;width:27px;height:37px;background:#3b3b3b"></div><svg style="left:670px;top:16px" width="10" height="5" viewBox="0 0 10 5"><path d="M0 0L10 0L5.0 5Z" fill="#eee"/></svg><svg style="left:8px;top:47px" width="12.5" height="13" viewBox="0 0 12.5 13"><path d="M4.9 0H7.6L10.6 10.7H12.4V12.8H7.4V10.7H8.2L7.7 8.9H4.8L4.3 10.7H5.1V12.8H0.1V10.7H1.9ZM6.25 2.9L5.3 6.9H7.2Z" fill="#f2f2f2" fill-rule="evenodd"/></svg><svg style="left:25px;top:51px" width="8" height="4" viewBox="0 0 8 4"><path d="M0 0L8 0L4.0 4Z" fill="#e6e6e6"/></svg><svg style="left:51px;top:46px" width="14" height="14" viewBox="0 0 14 14"><path d="M5.29 2.95L5.30 0.62L8.70 0.62L8.71 2.95L9.65 3.49L11.68 2.34L13.37 5.28L11.37 6.46L11.37 7.54L13.37 8.72L11.68 11.66L9.65 10.51L8.71 11.05L8.70 13.38L5.30 13.38L5.29 11.05L4.35 10.51L2.32 11.66L0.63 8.72L2.63 7.54L2.63 6.46L0.63 5.28L2.32 2.34L4.35 3.49Z" fill="#f5f5f5" stroke="#f5f5f5" stroke-width="1.2" stroke-linejoin="round"/><circle cx="7.0" cy="7.0" r="1.9" fill="#333"/></svg><div class="tt" style="left:69px;top:44px;color:#e6e6e6;font-size:14px;letter-spacing:0.25px">Output...</div><svg style="left:130px;top:51px" width="8" height="4" viewBox="0 0 8 4"><path d="M0 0L8 0L4.0 4Z" fill="#e6e6e6"/></svg><svg style="left:155px;top:46px" width="15" height="14" viewBox="0 0 15 14"><path d="M0.3 0.6H14.7L9.1 7.2V13.3L5.9 11.3V7.2Z" fill="#f5f5f5" stroke="#f5f5f5" stroke-width="0.6" stroke-linejoin="round"/></svg><div class="tt" style="left:173px;top:44px;color:#e6e6e6;font-size:14px;letter-spacing:0.25px">Filter...</div><svg style="left:221px;top:51px" width="8" height="4" viewBox="0 0 8 4"><path d="M0 0L8 0L4.0 4Z" fill="#e6e6e6"/></svg><div class="a" style="left:237px;top:38px;width:110px;height:31px;background:#28a745;border-radius:3px 3px 0 0"></div><svg style="left:246px;top:47px" width="12" height="14" viewBox="0 0 12 14"><path d="M2 0H12V10.5H2.2A1 1 0 0 0 2.2 12.5H12V14H2A2 2 0 0 1 0 12V2A2 2 0 0 1 2 0Z" fill="#f5f5f5"/><rect x="3.3" y="2.6" width="6.4" height="1.3" fill="#28a745"/><rect x="3.3" y="5" width="6.4" height="1.3" fill="#28a745"/></svg><div class="tt" style="left:262px;top:44px;color:#f5f5f5;font-size:14px;letter-spacing:0.25px">Libraries (2)</div><svg style="left:359px;top:46px" width="14" height="14" viewBox="0 0 14 14"><path d="M13.3 3.3L11 5.6 8.9 5.1 8.4 3 10.7 0.7C9 0 7 .4 5.8 1.7 4.6 2.9 4.3 4.6 4.8 6.2L0.6 10.4A1.6 1.6 0 0 0 3.6 13.4L7.8 9.2C9.4 9.7 11.1 9.4 12.3 8.2 13.6 7 14 5 13.3 3.3Z" fill="#eee"/></svg><div class="tt" style="left:377px;top:44px;color:#e6e6e6;font-size:14px;letter-spacing:0.25px">Overrides</div><svg style="left:458px;top:47px" width="11" height="11" viewBox="0 0 11 11"><path d="M5.5 0V11M0 5.5H11" stroke="#eee" stroke-width="1.8"/></svg><div class="tt" style="left:475px;top:44px;color:#e6e6e6;font-size:14px;letter-spacing:0.25px">Add new...</div><svg style="left:545px;top:51px" width="8" height="4" viewBox="0 0 8 4"><path d="M0 0L8 0L4.0 4Z" fill="#e6e6e6"/></svg><svg style="left:571px;top:46px" width="14" height="14" viewBox="0 0 14 14"><path d="M12.4 1.6L10.6 3.4" stroke="#eee" stroke-width="3.4" stroke-linecap="round"/><path d="M10.6 3.4L6.6 7.4" stroke="#eee" stroke-width="1.7"/><path d="M5.6 8.4L2.4 11.6" stroke="#eee" stroke-width="4.2" stroke-linecap="round"/></svg><div class="tt" style="left:589px;top:44px;color:#e6e6e6;font-size:14px;letter-spacing:0.25px">Add tool...</div><svg style="left:659px;top:51px" width="8" height="4" viewBox="0 0 8 4"><path d="M0 0L8 0L4.0 4Z" fill="#e6e6e6"/></svg></div><div class="ln" style="left:0;top:91px;width:46.1px"><span style="color:#c6c6c6">1</span>
<span style="color:#858585">2</span>
<span style="color:#858585">3</span>
<span style="color:#858585">4</span>
<span style="color:#858585">5</span>
<span style="color:#858585">6</span>
<span style="color:#858585">7</span>
<span style="color:#858585">8</span>
<span style="color:#858585">9</span>
<span style="color:#858585">10</span>
<span style="color:#858585">11</span>
<span style="color:#858585">12</span>
<span style="color:#858585">13</span>
<span style="color:#858585">14</span>
<span style="color:#858585">15</span>
<span style="color:#858585">16</span>
<span style="color:#858585">17</span>
<span style="color:#858585">18</span>
<span style="color:#858585">19</span>
<span style="color:#858585">20</span>
<span style="color:#858585">21</span>
<span style="color:#858585">22</span>
<span style="color:#858585">23</span>
<span style="color:#858585">24</span>
<span style="color:#858585">25</span>
<span style="color:#858585">26</span>
<span style="color:#858585">27</span>
<span style="color:#858585">28</span>
<span style="color:#858585">29</span>
<span style="color:#858585">30</span>
<span style="color:#858585">31</span>
<span style="color:#858585">32</span>
<span style="color:#858585">33</span>
<span style="color:#858585">34</span>
<span style="color:#858585">35</span>
<span style="color:#858585">36</span>
<span style="color:#858585">37</span></div><div class="a" style="left:72px;top:90px;width:536px;height:21px;border:2px solid #282828;border-right:none"></div><div class="a" style="left:72px;top:89px;width:532px;height:784px;overflow:hidden"><div class="code" style="left:0.3px;top:2px"><span class="t">Instruction set:          </span><span class="b">Arm64</span>
<span class="t">Instruction set features: a53</span>,<span class="t">crc</span>,<span class="t">-lse</span>,<span class="t">-fp16</span>,<span class="t">-dotprod</span>,<span class="t">-sve</span>
<span class="t">Compiler filter:          </span><span class="b">speed</span>


<span class="b">void </span><span class="t">Sort.</span>&lt;init&gt;() [<span class="n">4 </span><span class="t">bytes</span>]
    <span class="r">0</span><span class="b">x00008010    </span><span class="t">ret</span>

<span class="b">int</span>[] <span class="t">Sort.quickSort$default</span>(<span class="t">Sort</span>, <span class="b">int</span>[], <span class="b">int</span>, <span class="b">int</span>, <span class="b">int</span>, <span class="t">java.lang.Object</span>) [<span class="n">96 </span><span class="t">bytes</span>]
    <span class="r">0</span><span class="b">x00008020    </span><span class="t">sub x16</span>, <span class="d">sp</span>, #<span class="t">0x2000 </span>(<span class="n">8192</span>)
    <span class="r">0</span><span class="b">x00008024    </span><span class="t">ldr wzr</span>, [<span class="t">x16</span>]
     <span class="b">StackMap</span>[<span class="n">0</span>]   <span class="t">native_pc</span><span class="r">=</span><span class="t">0x4028</span>, <span class="t">dex_pc</span><span class="r">=</span><span class="t">0x0</span>, <span class="t">register_mask</span><span class="r">=</span><span class="t">0x0</span>, <span class="t">stack_mask</span><span class="r">=</span><span class="t">0b</span>
    <span class="r">0</span><span class="b">x00008028    </span><span class="t">str x0</span>, [<span class="d">sp</span>, <span class="n">#-48</span>]!
    <span class="r">0</span><span class="b">x0000802c    </span><span class="t">str x22</span>, [<span class="d">sp</span>, <span class="n">#24</span>]
    <span class="r">0</span><span class="b">x00008030    </span><span class="t">stp x23</span>, <span class="d">lr</span>, [<span class="d">sp</span>, <span class="n">#32</span>]
    <span class="r">0</span><span class="b">x00008034    </span><span class="t">ldr x21</span>, [<span class="t">x21</span>]
     <span class="b">StackMap</span>[<span class="n">1</span>]   <span class="t">native_pc</span><span class="r">=</span><span class="t">0x4038</span>, <span class="t">dex_pc</span><span class="r">=</span><span class="t">0x0</span>, <span class="t">register_mask</span><span class="r">=</span><span class="t">0x0</span>, <span class="t">stack_mask</span><span class="r">=</span><span class="t">0b</span>
    <span class="r">0</span><span class="b">x00008038    </span><span class="t">and w0</span>, <span class="t">w5</span>, #<span class="t">0x2</span>
    <span class="r">0</span><span class="b">x0000803c    </span><span class="t">cmp w0</span>, #<span class="t">0x0 </span>(<span class="n">0</span>)
    <span class="r">0</span><span class="b">x00008040    </span><span class="t">csel w3</span>, <span class="t">w3</span>, <span class="t">wzr</span>, <span class="t">eq</span>
    <span class="r">0</span><span class="b">x00008044    </span><span class="t">and w0</span>, <span class="t">w5</span>, #<span class="t">0x4</span>
    <span class="r">0</span><span class="b">x00008048    </span><span class="t">cbz w0</span>, <span class="c">#+0xc (addr 0x00008054)</span>
    <span class="r">0</span><span class="b">x0000804c    </span><span class="t">ldr w0</span>, [<span class="t">x2</span>, <span class="n">#8</span>]
     <span class="b">StackMap</span>[<span class="n">2</span>]   <span class="t">native_pc</span><span class="r">=</span><span class="t">0x4050</span>, <span class="t">dex_pc</span><span class="r">=</span><span class="t">0x9</span>, <span class="t">register_mask</span><span class="r">=</span><span class="t">0x0</span>, <span class="t">stack_mask</span><span class="r">=</span><span class="t">0b</span>
    <span class="r">0</span><span class="b">x00008050    </span><span class="t">sub w4</span>, <span class="t">w0</span>, #<span class="t">0x1 </span>(<span class="n">1</span>)
    <span class="r">0</span><span class="b">x00008054    </span><span class="t">ldr wzr</span>, [<span class="t">x1</span>]
     <span class="b">StackMap</span>[<span class="n">3</span>]   <span class="t">native_pc</span><span class="r">=</span><span class="t">0x4058</span>, <span class="t">dex_pc</span><span class="r">=</span><span class="t">0xc</span>, <span class="t">register_mask</span><span class="r">=</span><span class="t">0x0</span>, <span class="t">stack_mask</span><span class="r">=</span><span class="t">0b</span>
    <span class="r">0</span><span class="b">x00008058    </span><span class="t">mov x22</span>, <span class="t">x1</span>
    <span class="r">0</span><span class="b">x0000805c    </span><span class="t">mov x23</span>, <span class="t">x2</span>
    <span class="r">0</span><span class="b">x00008060    </span><span class="t">adrp x0</span>, <span class="c">#+0x4000 (addr 0x0000c000)</span>
    <span class="r">0</span><span class="b">x00008064    </span><span class="t">ldr x0</span>, [<span class="t">x0</span>]
    <span class="r">0</span><span class="b">x00008068    </span><span class="t">ldr </span><span class="d">lr</span>, [<span class="t">x0</span>, <span class="n">#24</span>]
    <span class="r">0</span><span class="b">x0000806c    </span><span class="t">blr </span><span class="d">lr</span>
     <span class="b">StackMap</span>[<span class="n">4</span>]   <span class="t">native_pc</span><span class="r">=</span><span class="t">0x4070</span>, <span class="t">dex_pc</span><span class="r">=</span><span class="t">0xc</span>, <span class="t">register_mask</span><span class="r">=</span><span class="t">0x0</span>, <span class="t">stack_mask</span><span class="r">=</span><span class="t">0b</span>
    <span class="r">0</span><span class="b">x00008070    </span><span class="t">ldr x22</span>, [<span class="d">sp</span>, <span class="n">#24</span>]
    <span class="r">0</span><span class="b">x00008074    </span><span class="t">ldp x23</span>, <span class="d">lr</span>, [<span class="d">sp</span>, <span class="n">#32</span>]
    <span class="r">0</span><span class="b">x00008078    </span><span class="t">add </span><span class="d">sp</span>, <span class="d">sp</span>, #<span class="t">0x30 </span>(<span class="n">48</span>)</div></div><div class="a" style="left:607px;top:89px;width:68px;height:300px;overflow:hidden"><div style="position:absolute;left:0;top:0;font-family:'Liberation Mono',monospace;font-size:10px;line-height:12px;white-space:pre;color:#d4d4d4;transform:scale(0.1667);transform-origin:0 0;-webkit-text-stroke:1.6px currentColor;opacity:0.72"><span class="t">Instruction set:          </span><span class="b">Arm64</span>
<span class="t">Instruction set features: a53</span>,<span class="t">crc</span>,<span class="t">-lse</span>,<span class="t">-fp16</span>,<span class="t">-dotprod</span>,<span class="t">-sve</span>
<span class="t">Compiler filter:          </span><span class="b">speed</span>


<span class="b">void </span><span class="t">Sort.</span>&lt;init&gt;() [<span class="n">4 </span><span class="t">bytes</span>]
    <span class="r">0</span><span class="b">x00008010    </span><span class="t">ret</span>

<span class="b">int</span>[] <span class="t">Sort.quickSort$default</span>(<span class="t">Sort</span>, <span class="b">int</span>[], <span class="b">int</span>, <span class="b">int</span>, <span class="b">int</span>, <span class="t">java.lang.Object</span>) [<span class="n">96 </span><span class="t">bytes</span>]
    <span class="r">0</span><span class="b">x00008020    </span><span class="t">sub x16</span>, <span class="d">sp</span>, #<span class="t">0x2000 </span>(<span class="n">8192</span>)
    <span class="r">0</span><span class="b">x00008024    </span><span class="t">ldr wzr</span>, [<span class="t">x16</span>]
     <span class="b">StackMap</span>[<span class="n">0</span>]   <span class="t">native_pc</span><span class="r">=</span><span class="t">0x4028</span>, <span class="t">dex_pc</span><span class="r">=</span><span class="t">0x0</span>, <span class="t">register_mask</span><span class="r">=</span><span class="t">0x0</span>, <span class="t">stack_mask</span><span class="r">=</span><span class="t">0b</span>
    <span class="r">0</span><span class="b">x00008028    </span><span class="t">str x0</span>, [<span class="d">sp</span>, <span class="n">#-48</span>]!
    <span class="r">0</span><span class="b">x0000802c    </span><span class="t">str x22</span>, [<span class="d">sp</span>, <span class="n">#24</span>]
    <span class="r">0</span><span class="b">x00008030    </span><span class="t">stp x23</span>, <span class="d">lr</span>, [<span class="d">sp</span>, <span class="n">#32</span>]
    <span class="r">0</span><span class="b">x00008034    </span><span class="t">ldr x21</span>, [<span class="t">x21</span>]
     <span class="b">StackMap</span>[<span class="n">1</span>]   <span class="t">native_pc</span><span class="r">=</span><span class="t">0x4038</span>, <span class="t">dex_pc</span><span class="r">=</span><span class="t">0x0</span>, <span class="t">register_mask</span><span class="r">=</span><span class="t">0x0</span>, <span class="t">stack_mask</span><span class="r">=</span><span class="t">0b</span>
    <span class="r">0</span><span class="b">x00008038    </span><span class="t">and w0</span>, <span class="t">w5</span>, #<span class="t">0x2</span>
    <span class="r">0</span><span class="b">x0000803c    </span><span class="t">cmp w0</span>, #<span class="t">0x0 </span>(<span class="n">0</span>)
    <span class="r">0</span><span class="b">x00008040    </span><span class="t">csel w3</span>, <span class="t">w3</span>, <span class="t">wzr</span>, <span class="t">eq</span>
    <span class="r">0</span><span class="b">x00008044    </span><span class="t">and w0</span>, <span class="t">w5</span>, #<span class="t">0x4</span>
    <span class="r">0</span><span class="b">x00008048    </span><span class="t">cbz w0</span>, <span class="c">#+0xc (addr 0x00008054)</span>
    <span class="r">0</span><span class="b">x0000804c    </span><span class="t">ldr w0</span>, [<span class="t">x2</span>, <span class="n">#8</span>]
     <span class="b">StackMap</span>[<span class="n">2</span>]   <span class="t">native_pc</span><span class="r">=</span><span class="t">0x4050</span>, <span class="t">dex_pc</span><span class="r">=</span><span class="t">0x9</span>, <span class="t">register_mask</span><span class="r">=</span><span class="t">0x0</span>, <span class="t">stack_mask</span><span class="r">=</span><span class="t">0b</span>
    <span class="r">0</span><span class="b">x00008050    </span><span class="t">sub w4</span>, <span class="t">w0</span>, #<span class="t">0x1 </span>(<span class="n">1</span>)
    <span class="r">0</span><span class="b">x00008054    </span><span class="t">ldr wzr</span>, [<span class="t">x1</span>]
     <span class="b">StackMap</span>[<span class="n">3</span>]   <span class="t">native_pc</span><span class="r">=</span><span class="t">0x4058</span>, <span class="t">dex_pc</span><span class="r">=</span><span class="t">0xc</span>, <span class="t">register_mask</span><span class="r">=</span><span class="t">0x0</span>, <span class="t">stack_mask</span><span class="r">=</span><span class="t">0b</span>
    <span class="r">0</span><span class="b">x00008058    </span><span class="t">mov x22</span>, <span class="t">x1</span>
    <span class="r">0</span><span class="b">x0000805c    </span><span class="t">mov x23</span>, <span class="t">x2</span>
    <span class="r">0</span><span class="b">x00008060    </span><span class="t">adrp x0</span>, <span class="c">#+0x4000 (addr 0x0000c000)</span>
    <span class="r">0</span><span class="b">x00008064    </span><span class="t">ldr x0</span>, [<span class="t">x0</span>]
    <span class="r">0</span><span class="b">x00008068    </span><span class="t">ldr </span><span class="d">lr</span>, [<span class="t">x0</span>, <span class="n">#24</span>]
    <span class="r">0</span><span class="b">x0000806c    </span><span class="t">blr </span><span class="d">lr</span>
     <span class="b">StackMap</span>[<span class="n">4</span>]   <span class="t">native_pc</span><span class="r">=</span><span class="t">0x4070</span>, <span class="t">dex_pc</span><span class="r">=</span><span class="t">0xc</span>, <span class="t">register_mask</span><span class="r">=</span><span class="t">0x0</span>, <span class="t">stack_mask</span><span class="r">=</span><span class="t">0b</span>
    <span class="r">0</span><span class="b">x00008070    </span><span class="t">ldr x22</span>, [<span class="d">sp</span>, <span class="n">#24</span>]
    <span class="r">0</span><span class="b">x00008074    </span><span class="t">ldp x23</span>, <span class="d">lr</span>, [<span class="d">sp</span>, <span class="n">#32</span>]
    <span class="r">0</span><span class="b">x00008078    </span><span class="t">add </span><span class="d">sp</span>, <span class="d">sp</span>, #<span class="t">0x30 </span>(<span class="n">48</span>)
    <span class="r">0</span><span class="b">x0000807c    </span><span class="t">add </span><span class="d">sp</span>, <span class="d">sp</span>, #<span class="t">0x30 </span>(<span class="n">48</span>)
    <span class="r">0</span><span class="b">x00008080    </span><span class="t">cmp w2</span>, <span class="t">w3</span>
    <span class="r">0</span><span class="b">x00008084    </span><span class="t">str w7</span>, [<span class="t">x1</span>, <span class="n">#16</span>]
    <span class="r">0</span><span class="b">x00008088    </span><span class="t">str w7</span>, [<span class="t">x1</span>, <span class="n">#16</span>]
    <span class="r">0</span><span class="b">x0000808c    </span><span class="t">stp x22</span>, <span class="t">x23</span>, [<span class="d">sp</span>, <span class="n">#24</span>]
    <span class="r">0</span><span class="b">x00008090    </span><span class="t">str w7</span>, [<span class="t">x1</span>, <span class="n">#16</span>]
     <span class="b">StackMap</span>[<span class="n">0</span>]   <span class="t">native_pc</span><span class="r">=</span><span class="t">0x40c4</span>, <span class="t">dex_pc</span><span class="r">=</span><span class="t">0x35</span>, <span class="t">register_mask</span><span class="r">=</span><span class="t">0x64</span>, <span class="t">stack_mask</span><span class="r">=</span><span class="t">0b</span>
    <span class="r">0</span><span class="b">x00008094    </span><span class="t">stp x22</span>, <span class="t">x23</span>, [<span class="d">sp</span>, <span class="n">#24</span>]

<span class="b">int</span>[] <span class="t">Sort.quickSort</span>(<span class="b">int</span>[], <span class="b">int</span>, <span class="b">int</span>) [<span class="n">412 </span><span class="t">bytes</span>]
    <span class="r">0</span><span class="b">x000080a0    </span><span class="t">add </span><span class="d">sp</span>, <span class="d">sp</span>, #<span class="t">0x30 </span>(<span class="n">48</span>)
     <span class="b">StackMap</span>[<span class="n">0</span>]   <span class="t">native_pc</span><span class="r">=</span><span class="t">0x40d4</span>, <span class="t">dex_pc</span><span class="r">=</span><span class="t">0x5</span>, <span class="t">register_mask</span><span class="r">=</span><span class="t">0x5d</span>, <span class="t">stack_mask</span><span class="r">=</span><span class="t">0b</span>
    <span class="r">0</span><span class="b">x000080a4    </span><span class="t">blr </span><span class="d">lr</span>
    <span class="r">0</span><span class="b">x000080a8    </span><span class="t">add </span><span class="d">sp</span>, <span class="d">sp</span>, #<span class="t">0x30 </span>(<span class="n">48</span>)
    <span class="r">0</span><span class="b">x000080ac    </span><span class="t">b </span><span class="c">#-0x24 (addr 0x00008090)</span>
    <span class="r">0</span><span class="b">x000080b0    </span><span class="t">ldr w0</span>, [<span class="t">x1</span>, <span class="n">#12</span>]
    <span class="r">0</span><span class="b">x000080b4    </span><span class="t">b.gt </span><span class="c">#+0x40 (addr 0x000080c0)</span>
    <span class="r">0</span><span class="b">x000080b8    </span><span class="t">ldr </span><span class="d">lr</span>, [<span class="t">x0</span>, <span class="n">#24</span>]
    <span class="r">0</span><span class="b">x000080bc    </span><span class="t">blr </span><span class="d">lr</span>
    <span class="r">0</span><span class="b">x000080c0    </span><span class="t">sub w3</span>, <span class="t">w3</span>, #<span class="t">0x1 </span>(<span class="n">1</span>)
    <span class="r">0</span><span class="b">x000080c4    </span><span class="t">sub w3</span>, <span class="t">w3</span>, #<span class="t">0x1 </span>(<span class="n">1</span>)
    <span class="r">0</span><span class="b">x000080c8    </span><span class="t">sub w3</span>, <span class="t">w3</span>, #<span class="t">0x1 </span>(<span class="n">1</span>)
    <span class="r">0</span><span class="b">x000080cc    </span><span class="t">ldr w0</span>, [<span class="t">x1</span>, <span class="n">#12</span>]
    <span class="r">0</span><span class="b">x000080d0    </span><span class="t">asr w5</span>, <span class="t">w5</span>, #<span class="t">0x1</span>
    <span class="r">0</span><span class="b">x000080d4    </span><span class="t">asr w5</span>, <span class="t">w5</span>, #<span class="t">0x1</span>
    <span class="r">0</span><span class="b">x000080d8    </span><span class="t">ldr w6</span>, [<span class="t">x1</span>, <span class="t">x5</span>, lsl #2]
    <span class="r">0</span><span class="b">x000080dc    </span><span class="t">sub w3</span>, <span class="t">w3</span>, #<span class="t">0x1 </span>(<span class="n">1</span>)
    <span class="r">0</span><span class="b">x000080e0    </span><span class="t">b.gt </span><span class="c">#+0x40 (addr 0x000080c0)</span>
    <span class="r">0</span><span class="b">x000080e4    </span><span class="t">ldr w0</span>, [<span class="t">x1</span>, <span class="n">#12</span>]
    <span class="r">0</span><span class="b">x000080e8    </span><span class="t">b.gt </span><span class="c">#+0x40 (addr 0x000080c0)</span>
    <span class="r">0</span><span class="b">x000080ec    </span><span class="t">sub w3</span>, <span class="t">w3</span>, #<span class="t">0x1 </span>(<span class="n">1</span>)
    <span class="r">0</span><span class="b">x000080f0    </span><span class="t">sub w3</span>, <span class="t">w3</span>, #<span class="t">0x1 </span>(<span class="n">1</span>)
    <span class="r">0</span><span class="b">x000080f4    </span><span class="t">b.gt </span><span class="c">#+0x40 (addr 0x000080c0)</span>
    <span class="r">0</span><span class="b">x000080f8    </span><span class="t">str w7</span>, [<span class="t">x1</span>, <span class="n">#16</span>]
    <span class="r">0</span><span class="b">x000080fc    </span><span class="t">blr </span><span class="d">lr</span>
    <span class="r">0</span><span class="b">x00008100    </span><span class="t">ret</span>
    <span class="r">0</span><span class="b">x00008104    </span><span class="t">stp x22</span>, <span class="t">x23</span>, [<span class="d">sp</span>, <span class="n">#24</span>]
    <span class="r">0</span><span class="b">x00008108    </span><span class="t">asr w5</span>, <span class="t">w5</span>, #<span class="t">0x1</span>
    <span class="r">0</span><span class="b">x0000810c    </span><span class="t">str w7</span>, [<span class="t">x1</span>, <span class="n">#16</span>]
    <span class="r">0</span><span class="b">x00008110    </span><span class="t">stp x22</span>, <span class="t">x23</span>, [<span class="d">sp</span>, <span class="n">#24</span>]
    <span class="r">0</span><span class="b">x00008114    </span><span class="t">blr </span><span class="d">lr</span>
    <span class="r">0</span><span class="b">x00008118    </span><span class="t">sub w3</span>, <span class="t">w3</span>, #<span class="t">0x1 </span>(<span class="n">1</span>)
    <span class="r">0</span><span class="b">x0000811c    </span><span class="t">add w5</span>, <span class="t">w2</span>, <span class="t">w3</span>
    <span class="r">0</span><span class="b">x00008120    </span><span class="t">sub w3</span>, <span class="t">w3</span>, #<span class="t">0x1 </span>(<span class="n">1</span>)
    <span class="r">0</span><span class="b">x00008124    </span><span class="t">stp x22</span>, <span class="t">x23</span>, [<span class="d">sp</span>, <span class="n">#24</span>]
    <span class="r">0</span><span class="b">x00008128    </span><span class="t">ret</span>
    <span class="r">0</span><span class="b">x0000812c    </span><span class="t">ret</span>
    <span class="r">0</span><span class="b">x00008130    </span><span class="t">b </span><span class="c">#-0x24 (addr 0x00008090)</span>
    <span class="r">0</span><span class="b">x00008134    </span><span class="t">sub w3</span>, <span class="t">w3</span>, #<span class="t">0x1 </span>(<span class="n">1</span>)
    <span class="r">0</span><span class="b">x00008138    </span><span class="t">str w7</span>, [<span class="t">x1</span>, <span class="n">#16</span>]
    <span class="r">0</span><span class="b">x0000813c    </span><span class="t">asr w5</span>, <span class="t">w5</span>, #<span class="t">0x1</span>
    <span class="r">0</span><span class="b">x00008140    </span><span class="t">add </span><span class="d">sp</span>, <span class="d">sp</span>, #<span class="t">0x30 </span>(<span class="n">48</span>)
    <span class="r">0</span><span class="b">x00008144    </span><span class="t">ret</span>
    <span class="r">0</span><span class="b">x00008148    </span><span class="t">stp x22</span>, <span class="t">x23</span>, [<span class="d">sp</span>, <span class="n">#24</span>]
    <span class="r">0</span><span class="b">x0000814c    </span><span class="t">add w5</span>, <span class="t">w2</span>, <span class="t">w3</span>
    <span class="r">0</span><span class="b">x00008150    </span><span class="t">stp x22</span>, <span class="t">x23</span>, [<span class="d">sp</span>, <span class="n">#24</span>]
    <span class="r">0</span><span class="b">x00008154    </span><span class="t">sub w3</span>, <span class="t">w3</span>, #<span class="t">0x1 </span>(<span class="n">1</span>)
    <span class="r">0</span><span class="b">x00008158    </span><span class="t">sub w3</span>, <span class="t">w3</span>, #<span class="t">0x1 </span>(<span class="n">1</span>)
    <span class="r">0</span><span class="b">x0000815c    </span><span class="t">b </span><span class="c">#-0x24 (addr 0x00008090)</span>
    <span class="r">0</span><span class="b">x00008160    </span><span class="t">blr </span><span class="d">lr</span>
    <span class="r">0</span><span class="b">x00008164    </span><span class="t">sub w3</span>, <span class="t">w3</span>, #<span class="t">0x1 </span>(<span class="n">1</span>)
    <span class="r">0</span><span class="b">x00008168    </span><span class="t">ldr </span><span class="d">lr</span>, [<span class="t">x0</span>, <span class="n">#24</span>]
    <span class="r">0</span><span class="b">x0000816c    </span><span class="t">cmp w2</span>, <span class="t">w3</span>
    <span class="r">0</span><span class="b">x00008170    </span><span class="t">asr w5</span>, <span class="t">w5</span>, #<span class="t">0x1</span>
    <span class="r">0</span><span class="b">x00008174    </span><span class="t">ret</span>
    <span class="r">0</span><span class="b">x00008178    </span><span class="t">blr </span><span class="d">lr</span>
     <span class="b">StackMap</span>[<span class="n">1</span>]   <span class="t">native_pc</span><span class="r">=</span><span class="t">0x41ac</span>, <span class="t">dex_pc</span><span class="r">=</span><span class="t">0x24</span>, <span class="t">register_mask</span><span class="r">=</span><span class="t">0xa8</span>, <span class="t">stack_mask</span><span class="r">=</span><span class="t">0b</span>
     <span class="b">StackMap</span>[<span class="n">2</span>]   <span class="t">native_pc</span><span class="r">=</span><span class="t">0x41ac</span>, <span class="t">dex_pc</span><span class="r">=</span><span class="t">0x25</span>, <span class="t">register_mask</span><span class="r">=</span><span class="t">0x3b</span>, <span class="t">stack_mask</span><span class="r">=</span><span class="t">0b</span>
    <span class="r">0</span><span class="b">x0000817c    </span><span class="t">ret</span>
     <span class="b">StackMap</span>[<span class="n">3</span>]   <span class="t">native_pc</span><span class="r">=</span><span class="t">0x41b0</span>, <span class="t">dex_pc</span><span class="r">=</span><span class="t">0x21</span>, <span class="t">register_mask</span><span class="r">=</span><span class="t">0x23</span>, <span class="t">stack_mask</span><span class="r">=</span><span class="t">0b</span>
    <span class="r">0</span><span class="b">x00008180    </span><span class="t">mov w4</span>, <span class="t">w2</span>
    <span class="r">0</span><span class="b">x00008184    </span><span class="t">ret</span>
     <span class="b">StackMap</span>[<span class="n">4</span>]   <span class="t">native_pc</span><span class="r">=</span><span class="t">0x41b8</span>, <span class="t">dex_pc</span><span class="r">=</span><span class="t">0x39</span>, <span class="t">register_mask</span><span class="r">=</span><span class="t">0xb8</span>, <span class="t">stack_mask</span><span class="r">=</span><span class="t">0b</span>
    <span class="r">0</span><span class="b">x00008188    </span><span class="t">ldr w0</span>, [<span class="t">x1</span>, <span class="n">#12</span>]
    <span class="r">0</span><span class="b">x0000818c    </span><span class="t">b.gt </span><span class="c">#+0x40 (addr 0x000080c0)</span>
    <span class="r">0</span><span class="b">x00008190    </span><span class="t">ldr w0</span>, [<span class="t">x1</span>, <span class="n">#12</span>]
     <span class="b">StackMap</span>[<span class="n">5</span>]   <span class="t">native_pc</span><span class="r">=</span><span class="t">0x41c4</span>, <span class="t">dex_pc</span><span class="r">=</span><span class="t">0x4</span>, <span class="t">register_mask</span><span class="r">=</span><span class="t">0x7</span>, <span class="t">stack_mask</span><span class="r">=</span><span class="t">0b</span>
     <span class="b">StackMap</span>[<span class="n">6</span>]   <span class="t">native_pc</span><span class="r">=</span><span class="t">0x41c4</span>, <span class="t">dex_pc</span><span class="r">=</span><span class="t">0x3a</span>, <span class="t">register_mask</span><span class="r">=</span><span class="t">0x6</span>, <span class="t">stack_mask</span><span class="r">=</span><span class="t">0b</span>
    <span class="r">0</span><span class="b">x00008194    </span><span class="t">b.gt </span><span class="c">#+0x40 (addr 0x000080c0)</span>
    <span class="r">0</span><span class="b">x00008198    </span><span class="t">b.gt </span><span class="c">#+0x40 (addr 0x000080c0)</span>
    <span class="r">0</span><span class="b">x0000819c    </span><span class="t">sub w3</span>, <span class="t">w3</span>, #<span class="t">0x1 </span>(<span class="n">1</span>)
    <span class="r">0</span><span class="b">x000081a0    </span><span class="t">ldr w6</span>, [<span class="t">x1</span>, <span class="t">x5</span>, lsl #2]
    <span class="r">0</span><span class="b">x000081a4    </span><span class="t">stp x22</span>, <span class="t">x23</span>, [<span class="d">sp</span>, <span class="n">#24</span>]
    <span class="r">0</span><span class="b">x000081a8    </span><span class="t">b.gt </span><span class="c">#+0x40 (addr 0x000080c0)</span>
    <span class="r">0</span><span class="b">x000081ac    </span><span class="t">ldr w0</span>, [<span class="t">x1</span>, <span class="n">#12</span>]
    <span class="r">0</span><span class="b">x000081b0    </span><span class="t">b </span><span class="c">#-0x24 (addr 0x00008090)</span>
    <span class="r">0</span><span class="b">x000081b4    </span><span class="t">blr </span><span class="d">lr</span>
     <span class="b">StackMap</span>[<span class="n">7</span>]   <span class="t">native_pc</span><span class="r">=</span><span class="t">0x41e8</span>, <span class="t">dex_pc</span><span class="r">=</span><span class="t">0x15</span>, <span class="t">register_mask</span><span class="r">=</span><span class="t">0x7e</span>, <span class="t">stack_mask</span><span class="r">=</span><span class="t">0b</span>
     <span class="b">StackMap</span>[<span class="n">8</span>]   <span class="t">native_pc</span><span class="r">=</span><span class="t">0x41e8</span>, <span class="t">dex_pc</span><span class="r">=</span><span class="t">0x1c</span>, <span class="t">register_mask</span><span class="r">=</span><span class="t">0x8e</span>, <span class="t">stack_mask</span><span class="r">=</span><span class="t">0b</span>
    <span class="r">0</span><span class="b">x000081b8    </span><span class="t">blr </span><span class="d">lr</span>
     <span class="b">StackMap</span>[<span class="n">9</span>]   <span class="t">native_pc</span><span class="r">=</span><span class="t">0x41ec</span>, <span class="t">dex_pc</span><span class="r">=</span><span class="t">0x10</span>, <span class="t">register_mask</span><span class="r">=</span><span class="t">0xc2</span>, <span class="t">stack_mask</span><span class="r">=</span><span class="t">0b</span>
    <span class="r">0</span><span class="b">x000081bc    </span><span class="t">b </span><span class="c">#-0x24 (addr 0x00008090)</span>
    <span class="r">0</span><span class="b">x000081c0    </span><span class="t">str w7</span>, [<span class="t">x1</span>, <span class="n">#16</span>]
    <span class="r">0</span><span class="b">x000081c4    </span><span class="t">cmp w2</span>, <span class="t">w3</span>
    <span class="r">0</span><span class="b">x000081c8    </span><span class="t">asr w5</span>, <span class="t">w5</span>, #<span class="t">0x1</span>
    <span class="r">0</span><span class="b">x000081cc    </span><span class="t">ldr w0</span>, [<span class="t">x1</span>, <span class="n">#12</span>]
    <span class="r">0</span><span class="b">x000081d0    </span><span class="t">add </span><span class="d">sp</span>, <span class="d">sp</span>, #<span class="t">0x30 </span>(<span class="n">48</span>)
    <span class="r">0</span><span class="b">x000081d4    </span><span class="t">sub w3</span>, <span class="t">w3</span>, #<span class="t">0x1 </span>(<span class="n">1</span>)
    <span class="r">0</span><span class="b">x000081d8    </span><span class="t">ldr w6</span>, [<span class="t">x1</span>, <span class="t">x5</span>, lsl #2]
    <span class="r">0</span><span class="b">x000081dc    </span><span class="t">asr w5</span>, <span class="t">w5</span>, #<span class="t">0x1</span>
    <span class="r">0</span><span class="b">x000081e0    </span><span class="t">asr w5</span>, <span class="t">w5</span>, #<span class="t">0x1</span>
    <span class="r">0</span><span class="b">x000081e4    </span><span class="t">b </span><span class="c">#-0x24 (addr 0x00008090)</span>
    <span class="r">0</span><span class="b">x000081e8    </span><span class="t">ldr </span><span class="d">lr</span>, [<span class="t">x0</span>, <span class="n">#24</span>]
     <span class="b">StackMap</span>[<span class="n">10</span>]   <span class="t">native_pc</span><span class="r">=</span><span class="t">0x421c</span>, <span class="t">dex_pc</span><span class="r">=</span><span class="t">0x23</span>, <span class="t">register_mask</span><span class="r">=</span><span class="t">0xf6</span>, <span class="t">stack_mask</span><span class="r">=</span><span class="t">0b</span>
    <span class="r">0</span><span class="b">x000081ec    </span><span class="t">ldr w0</span>, [<span class="t">x1</span>, <span class="n">#12</span>]
    <span class="r">0</span><span class="b">x000081f0    </span><span class="t">b.gt </span><span class="c">#+0x40 (addr 0x000080c0)</span>
    <span class="r">0</span><span class="b">x000081f4    </span><span class="t">cmp w2</span>, <span class="t">w3</span>
    <span class="r">0</span><span class="b">x000081f8    </span><span class="t">mov w4</span>, <span class="t">w2</span>
    <span class="r">0</span><span class="b">x000081fc    </span><span class="t">blr </span><span class="d">lr</span>
    <span class="r">0</span><span class="b">x00008200    </span><span class="t">mov w4</span>, <span class="t">w2</span></div></div><div class="a" style="left:598px;top:89px;width:6px;height:784px;background:linear-gradient(to right,rgba(0,0,0,0),rgba(0,0,0,0.8))"></div><div class="a" style="left:675px;top:90px;width:13px;height:160px;background:#4f4f4f;border-top:2px solid #666"></div><div class="a" style="left:72px;top:864px;width:377px;height:13px;background:#474747"></div></div></div></body></html>
